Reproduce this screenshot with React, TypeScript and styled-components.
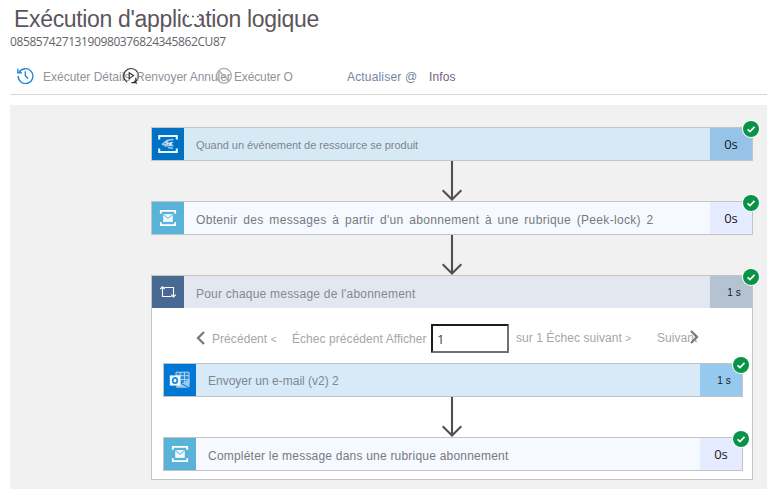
import React from "react";
import styled, { createGlobalStyle } from "styled-components";

const GlobalStyle = createGlobalStyle`
  * { box-sizing: border-box; }
  body { margin: 0; background: #fff; overflow: hidden; font-family: "Liberation Sans", Arial, sans-serif; }
`;

const Page = styled.div`
  display: flex;
  flex-direction: column;
  width: 767px;
  height: 489px;
  padding-left: 10px;
  overflow: hidden;
`;

const Header = styled.header`
  height: 57px;
  padding-top: 5px;
`;

const Title = styled.h1`
  position: relative;
  margin: 0;
  padding-left: 4px;
  font-size: 23px;
  font-weight: 400;
  line-height: 28px;
  letter-spacing: -0.33px;
  white-space: nowrap;
  color: #5c565c;
`;

const MoreButton = styled.span`
  position: absolute;
  left: 177px;
  top: 4px;
  width: 12px;
  height: 15px;
  background: #fff;
`;

const MoreDots = styled.svg`
  position: absolute;
  left: -2px;
  top: 6px;
`;

const RunId = styled.div`
  padding-top: 1px;
  font-family: "Open Sans", "Noto Sans", sans-serif;
  font-size: 12px;
  line-height: 16px;
  letter-spacing: -0.4px;
  color: #66646a;
`;

const Toolbar = styled.nav`
  display: flex;
  align-items: center;
  height: 38px;
  padding-left: 7px;
  border-bottom: 1px solid #d6d6d6;
`;

const ToolItem = styled.span<{ $width: number; $spacing?: number; $color?: string }>`
  position: relative;
  width: ${(p) => p.$width}px;
  flex: none;
  padding-top: 2px;
  font-size: 12px;
  line-height: 18px;
  letter-spacing: ${(p) => p.$spacing ?? 0}px;
  color: ${(p) => p.$color ?? "#92929a"};
  white-space: nowrap;
`;

const ToolIcon = styled.svg`
  flex: none;
  width: 17px;
  height: 17px;
  margin-right: 9px;
`;

const OverlayIcon = styled.svg<{ $left: number }>`
  position: absolute;
  left: ${(p) => p.$left}px;
  top: 1px;
  width: 18px;
  height: 18px;
`;

const Canvas = styled.main`
  flex: 1;
  margin-top: 10px;
  padding: 22px 14px 0 141px;
  background: #f1f1f1;
`;

const Card = styled.section<{ $tone: string }>`
  position: relative;
  display: grid;
  grid-template-columns: 32px 1fr 42px;
  grid-template-rows: 32px;
  height: 34px;
  border: 1px solid #c4c4c4;
  background: ${(p) => p.$tone};
`;

const Loop = styled.section`
  position: relative;
  height: 205px;
  border: 1px solid #c4c4c4;
  background: #fff;
`;

const LoopHeader = styled.div`
  display: grid;
  grid-template-columns: 32px 1fr 42px;
  grid-template-rows: 32px;
  height: 32px;
  background: #e3e8f0;
`;

const LoopBody = styled.div`
  padding: 0 9px 0 11px;
`;

const IconTile = styled.div<{ $tone: string }>`
  display: flex;
  align-items: center;
  justify-content: center;
  background: ${(p) => p.$tone};
`;

const Label = styled.div<{ $size?: number; $spacing?: number; $word?: number; $drop?: number; $color?: string }>`
  padding: ${(p) => p.$drop ?? 0}px 0 0 12px;
  font-size: ${(p) => p.$size ?? 12}px;
  line-height: 33px;
  letter-spacing: ${(p) => p.$spacing ?? 0}px;
  word-spacing: ${(p) => p.$word ?? 0}px;
  color: ${(p) => p.$color ?? "#77797d"};
  white-space: nowrap;
`;

const Duration = styled.div<{ $tone: string; $small?: boolean }>`
  height: 32px;
  padding-left: ${(p) => (p.$small ? 6 : 0)}px;
  background: ${(p) => p.$tone};
  color: #16181d;
  font-family: ${(p) => (p.$small ? '"Liberation Sans", sans-serif' : '"Open Sans", "Noto Sans", sans-serif')};
  font-size: ${(p) => (p.$small ? 10 : 13)}px;
  line-height: ${(p) => (p.$small ? 34 : 32)}px;
  text-align: center;
`;

const Badge = styled.svg`
  position: absolute;
  top: -8px;
  right: -8px;
  width: 18px;
  height: 18px;
`;

const ArrowRow = styled.div<{ $inner?: boolean }>`
  display: flex;
  justify-content: center;
  height: 40px;
  padding-right: ${(p) => (p.$inner ? 2 : 0)}px;
`;

const Pager = styled.div`
  display: grid;
  grid-template-columns: 16px 80px 139px 78px 148px auto;
  height: 55px;
  padding: 0 0 0 33px;
  align-items: center;
  color: #a6a6a6;
  font-size: 12px;
  line-height: 16px;
  white-space: nowrap;
`;

const PagerText = styled.span<{ $indent?: number; $raise?: number }>`
  position: relative;
  padding-left: ${(p) => p.$indent ?? 0}px;
  padding-top: ${(p) => 7 - (p.$raise ?? 0) * 2}px;
  letter-spacing: 0.06px;
`;

const Angle = styled.span`
  font-size: 10px;
`;

const PageInput = styled.input`
  width: 78px;
  height: 29px;
  margin-top: 6px;
  padding: 0 0 0 4px;
  border: 2px solid;
  border-color: #1c1c1c #707070 #707070 #1c1c1c;
  border-radius: 1px;
  outline: none;
  font-family: "Open Sans", "Noto Sans", sans-serif;
  font-size: 13px;
  color: #444;
`;

const PreviousChevron = styled.svg`
  margin-top: 5px;
`;

const NextChevron = styled.svg`
  position: absolute;
  left: 32px;
  top: 5px;
`;

function Check() {
  return (
    <Badge viewBox="0 0 18 18">
      <circle cx="9" cy="9" r="9" fill="#fff" />
      <circle cx="9" cy="9" r="8" fill="#089447" />
      <path d="M5.6 9.3l2.4 2.3 4.5-4.7" fill="none" stroke="#fff" strokeWidth="1.7" />
    </Badge>
  );
}

function Arrow({ inner }: { inner?: boolean }) {
  return (
    <ArrowRow $inner={inner}>
      <svg width="22" height="40" viewBox="0 0 22 40">
        <path d="M11 0V38M1.7 29.2L11 38.5L20.3 29.2" fill="none" stroke="#505050" strokeWidth="2.1" />
      </svg>
    </ArrowRow>
  );
}

function ServiceBusIcon() {
  return (
    <svg width="20" height="20" viewBox="0 0 20 20">
      <path d="M2.8 5.7V2.8H17.2V5.7M2.8 14.3V17.2H17.2V14.3" fill="none" stroke="#fff" strokeWidth="1.8" />
      <rect x="5.2" y="6.1" width="9.6" height="7.8" fill="#eef9fd" />
      <path d="M5.3 6.4L10 10.4L14.7 6.4" fill="none" stroke="#72c3e2" strokeWidth="1.1" />
    </svg>
  );
}

function EventGridIcon() {
  return (
    <svg width="20" height="20" viewBox="0 0 20 20">
      <path d="M1.2 5.6V2.1H18.8V5.6M1.2 14.4V17.9H18.8V14.4" fill="none" stroke="#eef7fd" strokeWidth="2" />
      <path d="M4 10.6L9 6.5L15.4 5.4M4 10.6H8L15 8.2M6.5 12.2L10.4 11.4L15.4 11.5M9.8 13.6L15 14.2" fill="none" stroke="#a9cfee" strokeWidth="1.4" />
      <circle cx="9" cy="8.7" r="1.7" fill="#b6d8f2" />
      <circle cx="12.5" cy="10" r="1.4" fill="#e2f0fb" />
    </svg>
  );
}

function LoopIcon() {
  return (
    <svg width="18" height="14" viewBox="0 0 18 14">
      <path d="M3.5 2V11.5H12.5M5.5 2.5H14.5V11.5M1.2 4L3.5 1.7L5.8 4M12.2 9.7L14.5 12L16.8 9.7" fill="none" stroke="#fff" strokeWidth="1.1" />
    </svg>
  );
}

function OutlookIcon() {
  return (
    <svg width="22" height="20" viewBox="0 0 22 20">
      <path d="M7 2.2H20V13.5H7Z" fill="#2b8bdb" stroke="#b6d8f3" strokeWidth="1" />
      <path d="M7 5.7H20M7 9.5H20M11.2 2V13M15.5 2V13" stroke="#b6d8f3" strokeWidth="0.9" />
      <path d="M7 17.8H20.5V9L13.5 13L8 14Z" fill="#9acbf0" />
      <path d="M12 13.3L20.5 18" stroke="#0078d4" strokeWidth="1" />
      <rect x="0.8" y="5.4" width="10.4" height="10.2" fill="#f3f9fe" />
      <ellipse cx="6" cy="10.5" rx="2.3" ry="2.7" fill="none" stroke="#1e86d8" strokeWidth="1.7" />
    </svg>
  );
}

export default function App() {
  return (
    <>
      <GlobalStyle />
      <Page>
        <Header>
          <Title>
            Exécution d'application logique
            <MoreButton>
              <MoreDots width="16" height="3" viewBox="0 0 16 3">
                <path d="M2 1.5h2M7 1.5h2M12 1.5h2" stroke="#605e5c" strokeWidth="1.3" />
              </MoreDots>
            </MoreButton>
          </Title>
          <RunId>08585742713190980376824345862CU87</RunId>
        </Header>
        <Toolbar>
          <ToolIcon viewBox="0 0 17 17">
            <path d="M2.1 5.4A7.4 7.4 0 1 1 1.1 9.1M.8 1.7V5.8H5M8.3 4.2V8.8L11.2 11.8" fill="none" stroke="#1480d8" strokeWidth="1.3" />
          </ToolIcon>
          <ToolItem $width={93}>
            Exécuter Détails
            <OverlayIcon $left={79} viewBox="0 0 18 18">
              <path d="M5.2 15.2A7.4 7.4 0 1 1 13.3 15M13.8 10.8V15.6H9.4M12 13.8L14.8 16.6" fill="none" stroke="#303030" strokeWidth="1.2" />
              <path d="M7.2 5.7L11.6 8.6L7.2 11.5Z" fill="none" stroke="#303030" strokeWidth="1.1" />
            </OverlayIcon>
          </ToolItem>
          <ToolItem $width={98} $spacing={-0.04}>
            Renvoyer Annuler
            <OverlayIcon $left={79} viewBox="0 0 18 18">
              <path d="M3.8 3.5L14.2 14.1" stroke="#a9a9a9" strokeWidth="1.2" />
              <circle cx="9" cy="8.8" r="7.4" fill="none" stroke="#a9a9a9" strokeWidth="1.2" />
            </OverlayIcon>
          </ToolItem>
          <ToolItem $width={113} $spacing={-0.14}>Exécuter O</ToolItem>
          <ToolItem $width={82} $spacing={0.17} $color="#7485a2">Actualiser @</ToolItem>
          <ToolItem $width={40} $spacing={0.1} $color="#75617c">Infos</ToolItem>
        </Toolbar>
        <Canvas>
          <Card $tone="#d8e9f6">
            <IconTile $tone="#0072c6"><EventGridIcon /></IconTile>
            <Label $size={11} $spacing={-0.04} $drop={1} $color="#7c8790">Quand un événement de ressource se produit</Label>
            <Duration $tone="#97c3e7">0s</Duration>
            <Check />
          </Card>
          <Arrow />
          <Card $tone="#f6f9ff">
            <IconTile $tone="#59b3d9"><ServiceBusIcon /></IconTile>
            <Label $spacing={0.33} $word={2} $drop={2}>Obtenir des messages à partir d'un abonnement à une rubrique (Peek-lock) 2</Label>
            <Duration $tone="#e6ecff">0s</Duration>
            <Check />
          </Card>
          <Arrow />
          <Loop>
            <LoopHeader>
              <IconTile $tone="#486991"><LoopIcon /></IconTile>
              <Label $spacing={0.22} $drop={2} $color="#85888d">Pour chaque message de l'abonnement</Label>
              <Duration $tone="#b5c2d2" $small>1 s</Duration>
            </LoopHeader>
            <Check />
            <LoopBody>
              <Pager>
                <PreviousChevron width="10" height="14" viewBox="0 0 10 14">
                  <path d="M8 1L2 7L8 13" fill="none" stroke="#7a7a7a" strokeWidth="2.3" />
                </PreviousChevron>
                <PagerText>Précédent <Angle>&lt;</Angle></PagerText>
                <PagerText>Échec précédent Afficher</PagerText>
                <PageInput defaultValue="1" />
                <PagerText $indent={7} $raise={1}>sur 1 Échec suivant <Angle>&gt;</Angle></PagerText>
                <PagerText $raise={1}>
                  Suivant
                  <NextChevron width="10" height="14" viewBox="0 0 10 14">
                    <path d="M2 1L8 7L2 13" fill="none" stroke="#7a7a7a" strokeWidth="2.2" />
                  </NextChevron>
                </PagerText>
              </Pager>
              <Card $tone="#d8eaf8">
                <IconTile $tone="#0078d4"><OutlookIcon /></IconTile>
                <Label $drop={1} $color="#7c8790">Envoyer un e-mail (v2) 2</Label>
                <Duration $tone="#97c8ee" $small>1 s</Duration>
                <Check />
              </Card>
              <Arrow inner />
              <Card $tone="#f6f9ff">
                <IconTile $tone="#59b3d9"><ServiceBusIcon /></IconTile>
                <Label $spacing={0.21} $drop={2}>Compléter le message dans une rubrique abonnement</Label>
                <Duration $tone="#e6ecff">0s</Duration>
                <Check />
              </Card>
            </LoopBody>
          </Loop>
        </Canvas>
      </Page>
    </>
  );
}
